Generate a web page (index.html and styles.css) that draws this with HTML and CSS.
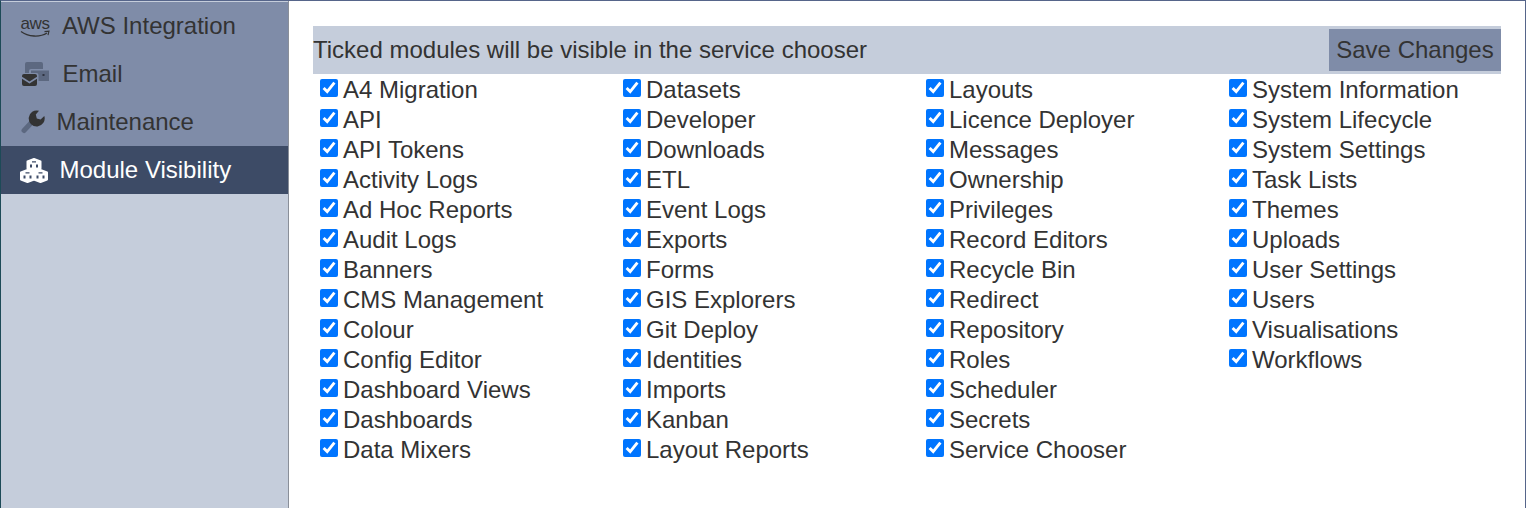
FILE: index.html

```html
<!DOCTYPE html>
<html lang="en">
<head>
  <meta charset="UTF-8" />
  <meta name="viewport" content="width=device-width, initial-scale=1" />
  <title>Module Visibility</title>
  <link rel="stylesheet" href="styles.css">
</head>
<body>
<div class="frame">
  <nav class="sidebar">
    <a class="nav-item item-aws">
      <span class="aws-icon">
        <span class="aws-word">aws</span>
        <svg width="30" height="8" viewBox="0 0 30 8"><path d="M1 1.500C8 7 20 7.500 27 3" fill="none" stroke="#333" stroke-width="1.300"/><path d="M24.500 1.600L29 1.200l-1 4" fill="none" stroke="#333" stroke-width="1.100"/></svg>
      </span>
      AWS Integration
    </a>
    <a class="nav-item item-email">
      <svg class="nav-icon" width="27" height="24" viewBox="0 0 27 24">
        <path d="M3 2a2 2 0 0 1 2-2h14a2 2 0 0 1 2 2v5H9a2 2 0 0 0-2 2v2H3z" fill="#5c6880"/>
        <path d="M9 8.500h18V19H16.500v-6a2 2 0 0 0-2-2H9z" fill="#5c6880"/>
        <rect x="20.500" y="12" width="2" height="2" fill="#2f3340"/>
        <path d="M0 14a2 2 0 0 1 2-2h11a2 2 0 0 1 2 2v.8l-7.500 4.700L0 14.800z" fill="#333"/>
        <path d="M0 16.800l7.500 4.700 7.500-4.700V22a2 2 0 0 1-2 2H2a2 2 0 0 1-2-2z" fill="#333"/>
      </svg>
      Email
    </a>
    <a class="nav-item item-maint">
      <svg class="nav-icon" width="24" height="24" viewBox="0 0 24 24">
        <path d="M10.500 12.500L3 20.500" fill="none" stroke="#5c6880" stroke-width="5" stroke-linecap="round"/>
        <path d="M18 .8A8 8 0 1 0 23.300 6L19.600 9.600 15.800 8.600 14.800 4.600z" fill="#333"/>
      </svg>
      Maintenance
    </a>
    <a class="nav-item item-active">
      <svg class="nav-icon" width="28" height="25" viewBox="0 0 28 25">
        <path class="cube" d="M14 1l6.500 2.500v7L14 13l-6.500-2.500v-7z"/>
        <path class="cube" d="M7.500 12l6.500 2.500v7L7.500 24 1 21.500v-7z"/>
        <path class="cube" d="M20.500 12l6.500 2.500v7L20.500 24 14 21.500v-7z"/>
        <path class="cube-dots" d="M10 6.500h2v3h-2zM16 6.500h2v3h-2zM3.500 17.500h2v3h-2zM9.500 17.500h2v3h-2zM16.500 17.500h2v3h-2zM22.500 17.500h2v3h-2z"/>
        <path class="cube-dots" d="M12 3.200h4v1.200h-4zM5.500 14.200h4v1.200h-4zM18.500 14.200h4v1.200h-4z"/>
      </svg>
      Module Visibility
    </a>
  </nav>

  <main class="content">
    <div class="toolbar">
      <span>Ticked modules will be visible in the service chooser</span>
      <button class="save-btn">Save Changes</button>
    </div>
    <div class="modules" id="modules"></div>
  </main>
</div>

<script>
  const modules = [
    "A4 Migration", "API", "API Tokens", "Activity Logs", "Ad Hoc Reports", "Audit Logs", "Banners",
    "CMS Management", "Colour", "Config Editor", "Dashboard Views", "Dashboards", "Data Mixers",
    "Datasets", "Developer", "Downloads", "ETL", "Event Logs", "Exports", "Forms",
    "GIS Explorers", "Git Deploy", "Identities", "Imports", "Kanban", "Layout Reports",
    "Layouts", "Licence Deployer", "Messages", "Ownership", "Privileges", "Record Editors", "Recycle Bin",
    "Redirect", "Repository", "Roles", "Scheduler", "Secrets", "Service Chooser",
    "System Information", "System Lifecycle", "System Settings", "Task Lists", "Themes", "Uploads",
    "User Settings", "Users", "Visualisations", "Workflows"
  ];

  const list = document.getElementById('modules');
  modules.forEach(name => {
    const label = document.createElement('label');
    label.className = 'module';
    const box = document.createElement('input');
    box.type = 'checkbox';
    box.checked = true;
    label.appendChild(box);
    label.appendChild(document.createTextNode(name));
    list.appendChild(label);
  });
</script>
</body>
</html>
```

FILE: styles.css

```css
html, body {
  margin: 0;
  padding: 0;
  height: 100%;
}
body {
  font-family: "Liberation Sans", Arial, sans-serif;
  font-size: 24px;
  color: #333;
  background: #fff;
}
.frame {
  display: flex;
  box-sizing: border-box;
  height: 100%;
  border-top: 1px solid #56658a;
  border-left: 1px solid #1d4a57;
  border-right: 1px solid #56658a;
}
.sidebar {
  box-sizing: border-box;
  width: 288px;
  flex: none;
  padding-top: 1px;
  background: #c5cddb;
  border-right: 1px solid #8a8f99;
}
.nav-item {
  display: flex;
  align-items: center;
  height: 48px;
  padding-left: 19px;
  background: #7f8ca8;
  cursor: pointer;
}
.nav-icon {
  flex: none;
}
.aws-icon {
  display: flex;
  flex-direction: column;
  align-items: center;
  width: 30px;
  margin-right: 12px;
  margin-top: 2px;
  color: #333;
}
.aws-word {
  font-size: 17px;
  line-height: 13px;
  letter-spacing: -0.4px;
}
.aws-icon svg {
  display: block;
}
.item-email .nav-icon {
  margin-left: 2px;
  margin-right: 13.5px;
}
.item-maint .nav-icon {
  margin-left: 1px;
  margin-right: 11.5px;
}
.item-active {
  background: #3d4b66;
  color: #fff;
}
.item-active .nav-icon {
  margin-right: 11.5px;
}
.cube {
  fill: #fff;
  stroke: #fff;
  stroke-width: 2;
  stroke-linejoin: round;
}
.cube-dots {
  fill: #3d4b66;
}
.content {
  flex: 1;
  min-width: 0;
  padding: 25px 24px 0;
}
.toolbar {
  display: flex;
  align-items: center;
  justify-content: space-between;
  height: 48px;
  background: #c5cddb;
}
.save-btn {
  width: 172px;
  height: 42px;
  padding: 0;
  border: none;
  background: #7f8ca8;
  color: #333;
  font: inherit;
  cursor: pointer;
}
.modules {
  display: grid;
  grid-template-columns: repeat(4, 1fr);
  grid-template-rows: repeat(13, 30px);
  grid-auto-flow: column;
  column-gap: 24px;
  margin-top: 1px;
}
.module {
  display: flex;
  align-items: center;
  white-space: nowrap;
  cursor: pointer;
}
.module input {
  width: 18px;
  height: 18px;
  margin: 0 5px 4px 7px;
}
```
